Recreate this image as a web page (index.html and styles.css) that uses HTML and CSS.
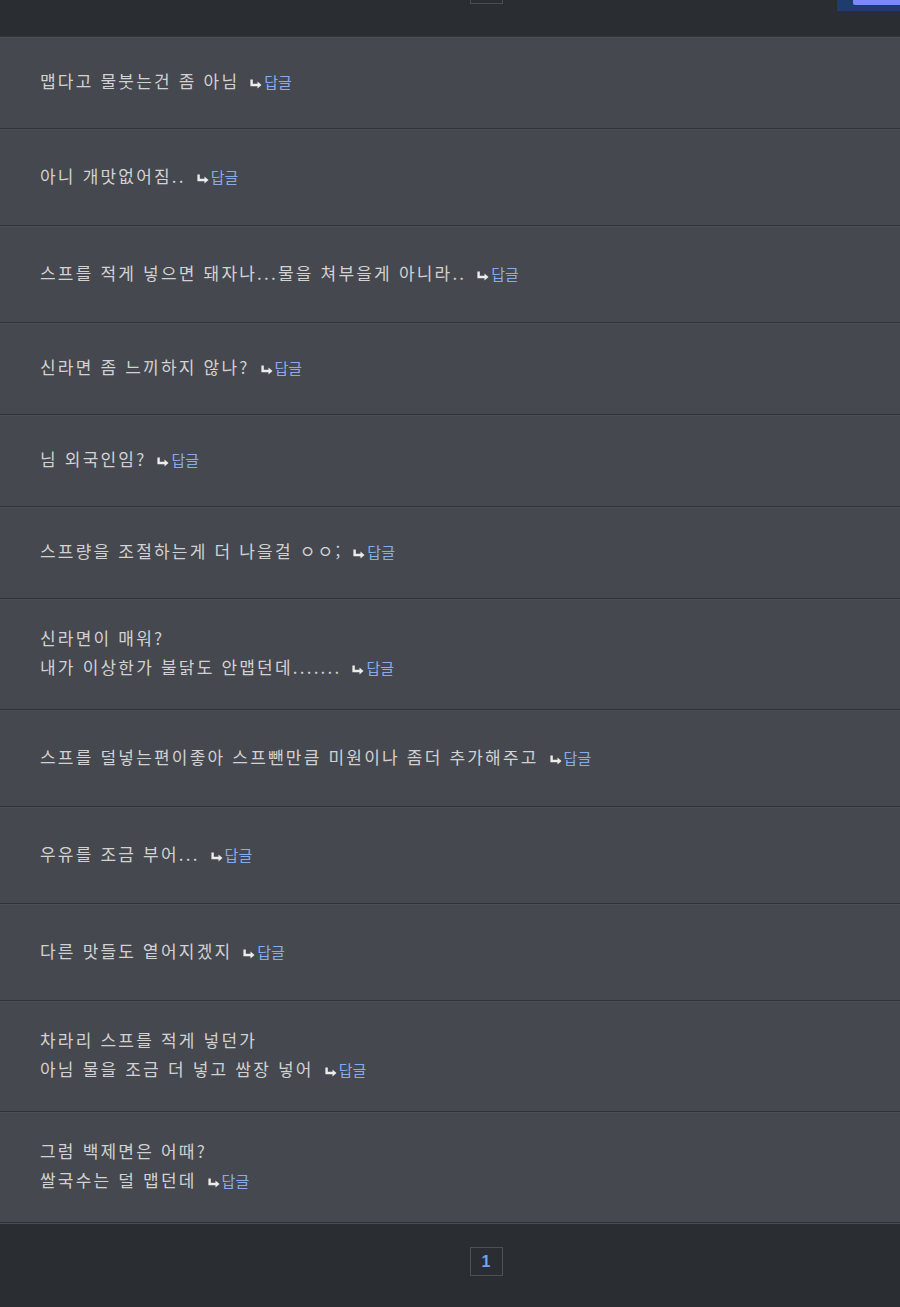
FILE: index.html
```html
<!DOCTYPE html>
<html lang="ko">
<head>
<meta charset="utf-8">
<title>댓글</title>
<link rel="stylesheet" href="styles.css">
</head>
<body>
<div class="top">
  <div class="top__pager"></div>
  <div class="top__btn"><div class="top__btn-inner"></div></div>
</div>
<ul class="comments">
  <li class="comment"><p class="comment__text">맵다고 물붓는건 좀 아님 <a class="reply" href="#"><svg class="reply__icon" viewBox="0 0 12 10"><path d="M1.6 0.5V6H8.5" fill="none" stroke="#ececec" stroke-width="2.4"/><path d="M7.5 2.5L11.5 6L7.5 9.5Z" fill="#ececec"/></svg>답글</a></p></li>
  <li class="comment comment--tall"><p class="comment__text">아니 개맛없어짐.. <a class="reply" href="#"><svg class="reply__icon" viewBox="0 0 12 10"><path d="M1.6 0.5V6H8.5" fill="none" stroke="#ececec" stroke-width="2.4"/><path d="M7.5 2.5L11.5 6L7.5 9.5Z" fill="#ececec"/></svg>답글</a></p></li>
  <li class="comment comment--tall"><p class="comment__text">스프를 적게 넣으면 돼자나...물을 쳐부을게 아니라.. <a class="reply" href="#"><svg class="reply__icon" viewBox="0 0 12 10"><path d="M1.6 0.5V6H8.5" fill="none" stroke="#ececec" stroke-width="2.4"/><path d="M7.5 2.5L11.5 6L7.5 9.5Z" fill="#ececec"/></svg>답글</a></p></li>
  <li class="comment"><p class="comment__text">신라면 좀 느끼하지 않나? <a class="reply" href="#"><svg class="reply__icon" viewBox="0 0 12 10"><path d="M1.6 0.5V6H8.5" fill="none" stroke="#ececec" stroke-width="2.4"/><path d="M7.5 2.5L11.5 6L7.5 9.5Z" fill="#ececec"/></svg>답글</a></p></li>
  <li class="comment"><p class="comment__text">님 외국인임? <a class="reply" href="#"><svg class="reply__icon" viewBox="0 0 12 10"><path d="M1.6 0.5V6H8.5" fill="none" stroke="#ececec" stroke-width="2.4"/><path d="M7.5 2.5L11.5 6L7.5 9.5Z" fill="#ececec"/></svg>답글</a></p></li>
  <li class="comment"><p class="comment__text">스프량을 조절하는게 더 나을걸 ㅇㅇ; <a class="reply" href="#"><svg class="reply__icon" viewBox="0 0 12 10"><path d="M1.6 0.5V6H8.5" fill="none" stroke="#ececec" stroke-width="2.4"/><path d="M7.5 2.5L11.5 6L7.5 9.5Z" fill="#ececec"/></svg>답글</a></p></li>
  <li class="comment comment--multi"><p class="comment__text">신라면이 매워?<br>내가 이상한가 불닭도 안맵던데....... <a class="reply" href="#"><svg class="reply__icon" viewBox="0 0 12 10"><path d="M1.6 0.5V6H8.5" fill="none" stroke="#ececec" stroke-width="2.4"/><path d="M7.5 2.5L11.5 6L7.5 9.5Z" fill="#ececec"/></svg>답글</a></p></li>
  <li class="comment comment--tall"><p class="comment__text">스프를 덜넣는편이좋아 스프뺀만큼 미원이나 좀더 추가해주고 <a class="reply" href="#"><svg class="reply__icon" viewBox="0 0 12 10"><path d="M1.6 0.5V6H8.5" fill="none" stroke="#ececec" stroke-width="2.4"/><path d="M7.5 2.5L11.5 6L7.5 9.5Z" fill="#ececec"/></svg>답글</a></p></li>
  <li class="comment comment--tall"><p class="comment__text">우유를 조금 부어... <a class="reply" href="#"><svg class="reply__icon" viewBox="0 0 12 10"><path d="M1.6 0.5V6H8.5" fill="none" stroke="#ececec" stroke-width="2.4"/><path d="M7.5 2.5L11.5 6L7.5 9.5Z" fill="#ececec"/></svg>답글</a></p></li>
  <li class="comment comment--tall"><p class="comment__text">다른 맛들도 옅어지겠지 <a class="reply" href="#"><svg class="reply__icon" viewBox="0 0 12 10"><path d="M1.6 0.5V6H8.5" fill="none" stroke="#ececec" stroke-width="2.4"/><path d="M7.5 2.5L11.5 6L7.5 9.5Z" fill="#ececec"/></svg>답글</a></p></li>
  <li class="comment comment--multi"><p class="comment__text">차라리 스프를 적게 넣던가<br>아님 물을 조금 더 넣고 쌈장 넣어 <a class="reply" href="#"><svg class="reply__icon" viewBox="0 0 12 10"><path d="M1.6 0.5V6H8.5" fill="none" stroke="#ececec" stroke-width="2.4"/><path d="M7.5 2.5L11.5 6L7.5 9.5Z" fill="#ececec"/></svg>답글</a></p></li>
  <li class="comment comment--multi"><p class="comment__text">그럼 백제면은 어때?<br>쌀국수는 덜 맵던데 <a class="reply" href="#"><svg class="reply__icon" viewBox="0 0 12 10"><path d="M1.6 0.5V6H8.5" fill="none" stroke="#ececec" stroke-width="2.4"/><path d="M7.5 2.5L11.5 6L7.5 9.5Z" fill="#ececec"/></svg>답글</a></p></li>
</ul>
<div class="footer">
  <a class="pager" href="#">1</a>
</div>
</body>
</html>
```

FILE: styles.css
```css
html, body {
  margin: 0;
  padding: 0;
  background: #2a2d32;
}
body {
  font-family: "Noto Sans CJK KR", "Noto Sans", sans-serif;
  color: #d2d2d2;
}
.top {
  height: 36px;
  position: relative;
  background: #2a2d32;
  border-bottom: 1px solid #33363b;
}
.top__pager {
  position: absolute;
  left: 470px;
  top: -25px;
  width: 31px;
  height: 27px;
  border: 1px solid #4a4d53;
}
.top__btn {
  position: absolute;
  right: 0;
  top: 0;
  width: 63px;
  height: 11px;
  background: #1f3c6e;
}
.top__btn-inner {
  position: absolute;
  right: 0;
  top: 0;
  width: 47px;
  height: 5px;
  background: #7b88ff;
  border-bottom-left-radius: 2px;
}
.comments {
  list-style: none;
  margin: 0;
  padding: 0;
}
.comment {
  display: flex;
  align-items: center;
  height: 91px;
  padding: 0 40px;
  background: #45484e;
  border-bottom: 1px solid #2f3237;
  box-shadow: inset 0 1px 0 #4b4e54;
}
.comment--tall {
  height: 96px;
}
.comment--multi {
  height: 110px;
}
.comment__text {
  margin: 0;
  padding-bottom: 3px;
  font-size: 17px;
  line-height: 29px;
  letter-spacing: 2.2px;
}
.reply {
  margin-left: 4px;
  color: #86acec;
  text-decoration: none;
  font-size: 15px;
  letter-spacing: 0;
}
.reply__icon {
  width: 12px;
  height: 10px;
  margin-right: 2px;
  vertical-align: -1px;
}
.footer {
  height: 85px;
  background: #2a2d32;
  border-top: 1px solid #4a4d53;
  display: flex;
  justify-content: center;
  padding-top: 23px;
  padding-left: 72px;
  box-sizing: border-box;
}
.pager {
  width: 31px;
  height: 27px;
  border: 1px solid #4c4f55;
  display: flex;
  align-items: center;
  justify-content: center;
  color: #6ea3ee;
  font-weight: 700;
  font-size: 16px;
  text-decoration: none;
  font-family: "Liberation Sans", sans-serif;
}
```
